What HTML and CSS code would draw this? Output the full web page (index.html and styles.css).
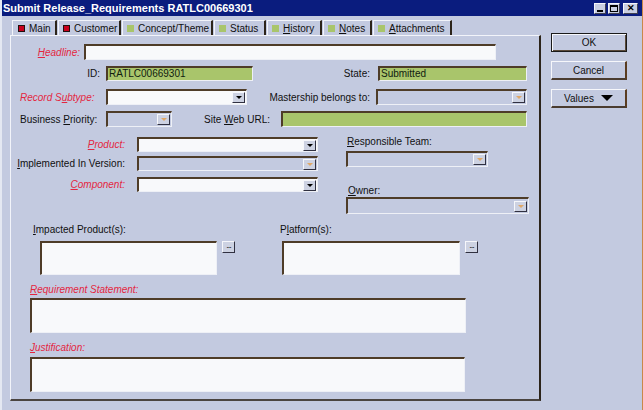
FILE: index.html
```html
<!DOCTYPE html>
<html>
<head>
<meta charset="utf-8">
<link rel="stylesheet" href="styles.css">
</head>
<body>
<div class="window">
  <div class="titlebar">
    <span class="title">Submit Release_Requirements RATLC00669301</span>
    <div class="controls">
      <div class="cbtn cmin"><span class="minbar"></span></div>
      <div class="cbtn cmax"><span class="maxbox"></span></div>
      <div class="cbtn cclose">✕</div>
    </div>
  </div>
  <div class="client">
    <div class="left">
      <div class="tabs">
        <div class="tab tab-main active"><span class="ico red"></span>Main</div>
        <div class="tab tab-cust"><span class="ico red"></span>Customer</div>
        <div class="tab tab-conc"><span class="ico green"></span>Concept/Theme</div>
        <div class="tab tab-stat"><span class="ico green"></span>Status</div>
        <div class="tab tab-hist"><span class="ico green"></span><u>H</u>istory</div>
        <div class="tab tab-note"><span class="ico green"></span><u>N</u>otes</div>
        <div class="tab tab-att"><span class="ico green"></span><u>A</u>ttachments</div>
      </div>
      <div class="panel">
        <div class="row r1">
          <div class="lbl req right w-head"><u>H</u>eadline:</div>
          <div class="field white f-head"></div>
        </div>
        <div class="row r2">
          <div class="lbl right w-id">ID:</div>
          <div class="field green f-id">RATLC00669301</div>
          <div class="lbl right w-state">State:</div>
          <div class="field green f-state">Submitted</div>
        </div>
        <div class="row r3">
          <div class="lbl req w-left">Record S<u>u</u>btype:</div>
          <div class="field white sel f-sub"><span class="arrow"><span class="tri"></span></span></div>
          <div class="lbl right w-mast">Mastership belongs to:</div>
          <div class="field dis sel f-mast"><span class="arrow"><span class="tri tri-dis"></span></span></div>
        </div>
        <div class="row r4">
          <div class="lbl w-left">Business <u>P</u>riority:</div>
          <div class="field dis sel f-prio"><span class="arrow"><span class="tri tri-dis"></span></span></div>
          <div class="lbl right w-url">Site <u>W</u>eb URL:</div>
          <div class="field green f-url"></div>
        </div>
        <div class="lower">
          <div class="lcol">
            <div class="row r-prod">
              <div class="lbl req right w-low"><u>P</u>roduct:</div>
              <div class="field white sel f-low"><span class="arrow"><span class="tri"></span></span></div>
            </div>
            <div class="row r-impl">
              <div class="lbl right w-low"><u>I</u>mplemented In Version:</div>
              <div class="field dis sel f-low"><span class="arrow"><span class="tri tri-dis"></span></span></div>
            </div>
            <div class="row r-comp">
              <div class="lbl req right w-low"><u>C</u>omponent:</div>
              <div class="field white sel f-low"><span class="arrow"><span class="tri"></span></span></div>
            </div>
          </div>
          <div class="rcol">
            <div class="lbl l-team"><u>R</u>esponsible Team:</div>
            <div class="field dis sel f-team"><span class="arrow"><span class="tri tri-dis"></span></span></div>
            <div class="lbl l-owner"><u>O</u>wner:</div>
            <div class="field dis sel f-owner"><span class="arrow"><span class="tri tri-dis"></span></span></div>
          </div>
        </div>
        <div class="multi">
          <div class="mblock mb-imp">
            <div class="lbl"><u>I</u>mpacted Product(s):</div>
            <div class="mrow">
              <div class="area a-imp"></div>
              <div class="dots">...</div>
            </div>
          </div>
          <div class="mblock mb-plat">
            <div class="lbl">P<u>l</u>atform(s):</div>
            <div class="mrow">
              <div class="area a-plat"></div>
              <div class="dots">...</div>
            </div>
          </div>
        </div>
        <div class="lbl req l-reqs"><u>R</u>equirement Statement:</div>
        <div class="area a-reqs"></div>
        <div class="lbl req l-just"><u>J</u>ustification:</div>
        <div class="area a-just"></div>
      </div>
    </div>
    <div class="side">
      <div class="btn btn-default">OK</div>
      <div class="btn">Cancel</div>
      <div class="btn btn-values">Values <span class="vtri"></span></div>
    </div>
  </div>
</div>
</body>
</html>
```
FILE: styles.css
```css
* { box-sizing: border-box; }
html, body { margin: 0; padding: 0; }
body {
  width: 643px;
  height: 410px;
  overflow: hidden;
  background: #c3cae0;
  font-family: "Liberation Sans", Arial, sans-serif;
  font-size: 10px;
  color: #101010;
}
.window {
  width: 643px;
  height: 410px;
  border-left: 2px solid #e4e8f2;
  border-right: 1px solid #c8884a;
}
.titlebar {
  height: 16px;
  background: #0a1c7e;
  display: flex;
  align-items: center;
  justify-content: space-between;
  padding-left: 1px;
  padding-right: 4px;
}
.title {
  color: #ffffff;
  font-weight: bold;
  font-size: 11px;
}
.controls { display: flex; align-items: center; }
.cbtn {
  width: 12px;
  height: 11px;
  background: #c9cfe2;
  border-top: 1px solid #f4f6fb;
  border-left: 1px solid #f4f6fb;
  border-right: 1px solid #404050;
  border-bottom: 1px solid #404050;
  display: flex;
  align-items: center;
  justify-content: center;
  color: #000;
  font-size: 9px;
  font-weight: bold;
  line-height: 1;
}
.cmin { margin-right: 2px; align-items: flex-end; padding-bottom: 1px; }
.minbar { width: 6px; height: 2px; background: #000; }
.cmax { margin-right: 3px; }
.maxbox { width: 8px; height: 7px; border: 1px solid #000; border-top-width: 2px; }
.cclose { width: 15px; }

.client { display: flex; }
.left { margin-left: 8px; width: 531px; }
.tabs {
  display: flex;
  height: 19px;
  padding-top: 4px;
  padding-left: 2px;
}
.tab {
  height: 15px;
  display: flex;
  align-items: center;
  padding-top: 1px;
  border-top: 1px solid #f2f4fa;
  border-left: 1px solid #f2f4fa;
  border-right: 2px solid #2c241a;
  padding-left: 4px;
  margin-right: 1px;
  white-space: nowrap;
}
.tab.active { padding-left: 5px; }
.ico {
  width: 7px;
  height: 7px;
  margin-right: 4px;
  flex: none;
}
.ico.red { background: #c8001c; border: 1px solid #201010; }
.ico.green { background: #a9c56b; }
.tab-main { width: 45px; }
.tab-cust { width: 63px; }
.tab-conc { width: 91px; }
.tab-stat { width: 52px; }
.tab-hist { width: 55px; }
.tab-note { width: 49px; }
.tab-att { width: 79px; }

.panel {
  width: 531px;
  height: 366px;
  border-top: 1px solid #f2f4fa;
  border-left: 1px solid #f2f4fa;
  border-right: 2px solid #2c241a;
  border-bottom: 2px solid #4a4440;
}
.row { display: flex; align-items: center; }
.lbl { white-space: nowrap; font-size: 10px; line-height: 11px; flex: none; }
.right { text-align: right; }
.req { color: #e42640; font-style: italic; }

.field {
  flex: none;
  border-top: 2px solid #4e3c28;
  border-left: 2px solid #4e3c28;
  border-right: 1px solid #eef0f6;
  border-bottom: 1px solid #eef0f6;
  font-size: 10px;
  line-height: 11px;
  padding-left: 1px;
}
.white { background: #f8f9fb; }
.green { background: #a9c56b; color: #102010; }
.dis { background: #c3cae0; }
.sel { display: flex; justify-content: flex-end; align-items: center; padding-right: 1px; }
.arrow {
  width: 13px;
  height: 11px;
  background: #cdd2e2;
  border-top: 1px solid #f6f7fb;
  border-left: 1px solid #f6f7fb;
  border-right: 1px solid #303040;
  border-bottom: 1px solid #303040;
  display: flex;
  align-items: center;
  justify-content: center;
}
.tri {
  width: 0; height: 0;
  border-left: 3px solid transparent;
  border-right: 3px solid transparent;
  border-top: 3px solid #000;
}
.tri-dis { border-top-color: #e0a868; }

.r1 { margin-top: 8px; height: 16px; }
.w-head { width: 69px; margin-right: 4px; }
.f-head { width: 412px; height: 16px; }

.r2 { margin-top: 6px; height: 15px; }
.w-id { width: 89px; margin-right: 6px; }
.f-id { width: 147px; height: 15px; }
.w-state { width: 117px; margin-right: 8px; }
.f-state { width: 149px; height: 15px; }

.r3 { margin-top: 8px; height: 16px; }
.w-left { width: 86px; margin-left: 9px; }
.f-sub { width: 141px; height: 16px; }
.w-mast { width: 123px; margin-right: 6px; }
.f-mast { width: 151px; height: 16px; }

.r4 { margin-top: 6px; height: 16px; }
.f-prio { width: 66px; height: 16px; }
.w-url { width: 98px; margin-right: 11px; }
.f-url { width: 246px; height: 16px; }

.lower { display: flex; height: 87px; }
.lcol { width: 335px; }
.r-prod { margin-top: 10px; height: 15px; }
.r-impl { margin-top: 4px; height: 15px; }
.r-comp { margin-top: 6px; height: 15px; }
.w-low { width: 114px; margin-right: 12px; }
.f-low { width: 181px; height: 15px; }
.rcol { display: flex; flex-direction: column; align-items: flex-start; }
.l-team { margin-top: 9px; height: 12px; margin-left: 1px; }
.f-team { margin-top: 3px; width: 142px; height: 16px; }
.l-owner { margin-top: 18px; height: 12px; margin-left: 2px; }
.f-owner { width: 183px; height: 17px; }

.multi { display: flex; margin-top: 10px; }
.mblock { display: flex; flex-direction: column; }
.mb-imp { margin-left: 22px; width: 247px; }
.mrow { display: flex; align-items: flex-start; margin-top: 6px; }
.area {
  background: #f8f9fb;
  border-top: 2px solid #4e3c28;
  border-left: 2px solid #4e3c28;
  border-right: 1px solid #eef0f6;
  border-bottom: 1px solid #eef0f6;
  flex: none;
}
.a-imp { margin-left: 7px; width: 177px; height: 34px; }
.a-plat { margin-left: 2px; width: 178px; height: 34px; }
.dots {
  margin-left: 5px;
  width: 13px;
  height: 12px;
  background: #cdd2e2;
  border-top: 1px solid #f6f7fb;
  border-left: 1px solid #f6f7fb;
  border-right: 1px solid #303040;
  border-bottom: 1px solid #303040;
  font-size: 9px;
  line-height: 6px;
  text-align: center;
  letter-spacing: -1px;
}
.l-reqs { margin-top: 9px; margin-left: 19px; height: 11px; }
.a-reqs { margin-top: 3px; margin-left: 19px; width: 436px; height: 35px; }
.l-just { margin-top: 9px; margin-left: 19px; height: 11px; }
.a-just { margin-top: 4px; margin-left: 19px; width: 435px; height: 35px; }

.side {
  margin-left: 10px;
  padding-top: 17px;
  display: flex;
  flex-direction: column;
  gap: 9px;
}
.btn {
  width: 76px;
  height: 19px;
  display: flex;
  align-items: center;
  justify-content: center;
  background: #c3cae0;
  border-top: 1px solid #f6f7fb;
  border-left: 1px solid #f6f7fb;
  border-right: 2px solid #5a3c20;
  border-bottom: 2px solid #4a3c30;
  font-size: 10px;
}
.btn-default {
  border: 1px solid #1a1a1a;
  box-shadow: inset 1px 1px 0 #f6f7fb, inset -1px -1px 0 #5a4a3a;
}
.btn-values { gap: 7px; }
.vtri {
  width: 0; height: 0;
  border-left: 6px solid transparent;
  border-right: 6px solid transparent;
  border-top: 6px solid #000;
}
```
